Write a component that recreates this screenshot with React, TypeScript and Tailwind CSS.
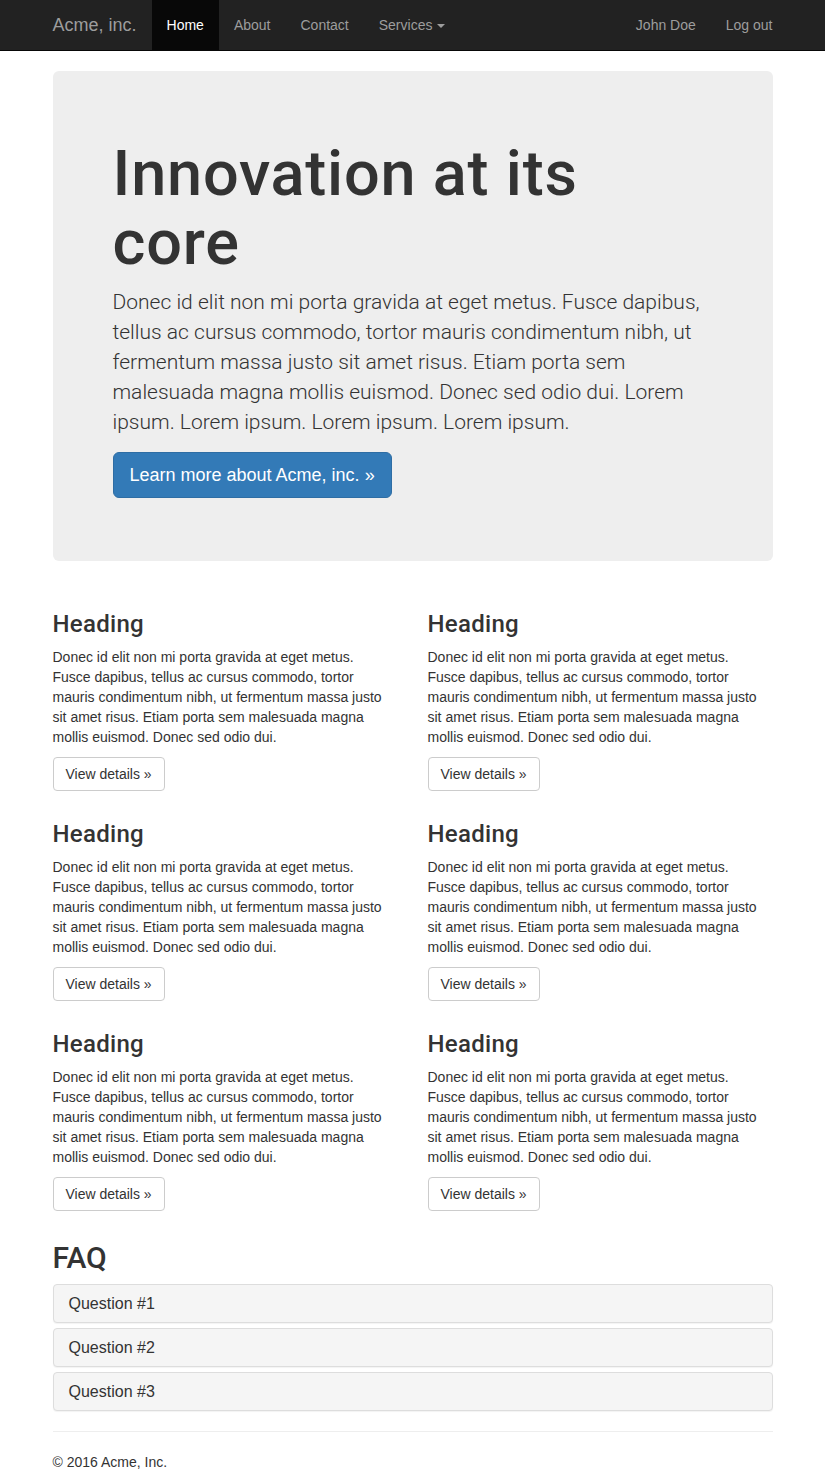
import React from "react";

const cardLines = [
  "Donec id elit non mi porta gravida at eget metus.",
  "Fusce dapibus, tellus ac cursus commodo, tortor",
  "mauris condimentum nibh, ut fermentum massa justo",
  "sit amet risus. Etiam porta sem malesuada magna",
  "mollis euismod. Donec sed odio dui.",
];

const heroLines = [
  "Donec id elit non mi porta gravida at eget metus. Fusce dapibus,",
  "tellus ac cursus commodo, tortor mauris condimentum nibh, ut",
  "fermentum massa justo sit amet risus. Etiam porta sem",
  "malesuada magna mollis euismod. Donec sed odio dui. Lorem",
  "ipsum. Lorem ipsum. Lorem ipsum. Lorem ipsum.",
];

const headFont = "font-['Roboto','Liberation_Sans',Arial,sans-serif] font-medium";

function Card() {
  return (
    <div className="px-[15px]">
      <h3 className={`mt-[20px] mb-[10px] text-[24px] leading-[26px] tracking-[0.3px] ${headFont}`}>Heading</h3>
      <p className="mb-[10px]">
        {cardLines.map((l, i) => (
          <React.Fragment key={i}>
            {l}
            {i < cardLines.length - 1 && <br />}
          </React.Fragment>
        ))}
      </p>
      <div className="mb-[10px] flex">
        <a className="inline-flex h-[34px] items-center px-[12px] border border-[#ccc] rounded-[4px] bg-white text-[#333] text-[14px]">
          View details »
        </a>
      </div>
    </div>
  );
}

export default function App() {
  const navLink = "block px-[15px] py-[15px] text-[14px] leading-[20px] text-[#9d9d9d]";
  return (
    <div className="min-h-screen bg-white text-[#333] text-[14px] leading-[20px] font-['Liberation_Sans',Arial,Helvetica,sans-serif]">
      <nav className="h-[51px] bg-[#222] border-b border-[#080808]">
        <div className="w-[750px] mx-auto px-[15px] h-[50px] flex">
          <a className="-ml-[15px] px-[15px] py-[15px] h-[50px] text-[18px] leading-[20px] text-[#9d9d9d]">Acme, inc.</a>
          <ul className="flex">
            <li>
              <a className="block px-[15px] py-[15px] text-[14px] leading-[20px] text-white bg-[#080808]">Home</a>
            </li>
            <li>
              <a className={navLink}>About</a>
            </li>
            <li>
              <a className={navLink}>Contact</a>
            </li>
            <li>
              <a className={navLink}>
                Services
                <span className="inline-block ml-[5px] w-0 h-0 align-middle border-t-[4px] border-x-[4px] border-x-transparent border-t-[#9d9d9d]" />
              </a>
            </li>
          </ul>
          <ul className="flex ml-auto -mr-[15px]">
            <li>
              <a className={navLink}>John Doe</a>
            </li>
            <li>
              <a className={navLink}>Log out</a>
            </li>
          </ul>
        </div>
      </nav>

      <div className="w-[750px] mx-auto px-[15px]">
        <div className="mt-[20px] rounded-[6px] bg-[#eee] px-[60px] pt-[48px] pb-[48px]">
          <h1 className={`mt-[20px] mb-[10px] text-[63px] leading-[69px] tracking-[0.8px] text-[#333] ${headFont}`}>
            Innovation at its
            <br />
            core
          </h1>
          <p className="mb-[15px] text-[21px] leading-[30px] font-['Roboto','Liberation_Sans',sans-serif] font-light">
            {heroLines.map((l, i) => (
              <React.Fragment key={i}>
                {l}
                {i < heroLines.length - 1 && <br />}
              </React.Fragment>
            ))}
          </p>
          <div className="flex mb-[15px]">
            <a className="inline-flex h-[46px] items-center px-[16px] bg-[#337ab7] border border-[#2e6da4] rounded-[6px] text-white text-[18px]">
              Learn more about Acme, inc. »
            </a>
          </div>
        </div>

        <div className="mt-[30px] -mx-[15px] grid grid-cols-2">
          <Card />
          <Card />
          <Card />
          <Card />
          <Card />
          <Card />
        </div>

        <h2 className={`mt-[20px] mb-[10px] text-[30px] leading-[33px] ${headFont}`}>FAQ</h2>
        <div className="flex flex-col gap-[5px] mb-[20px]">
          {["Question #1", "Question #2", "Question #3"].map((q) => (
            <div
              key={q}
              className="border border-[#ddd] rounded-[4px] bg-[#f5f5f5] shadow-[0_1px_1px_rgba(0,0,0,0.05)] px-[15px] py-[10px] text-[16px] leading-[17px] text-[#333]"
            >
              {q}
            </div>
          ))}
        </div>
        <hr className="border-0 border-t border-[#eee]" />
        <footer>
          <p className="mt-[20px] mb-[10px]">© 2016 Acme, Inc.</p>
        </footer>
      </div>
    </div>
  );
}
